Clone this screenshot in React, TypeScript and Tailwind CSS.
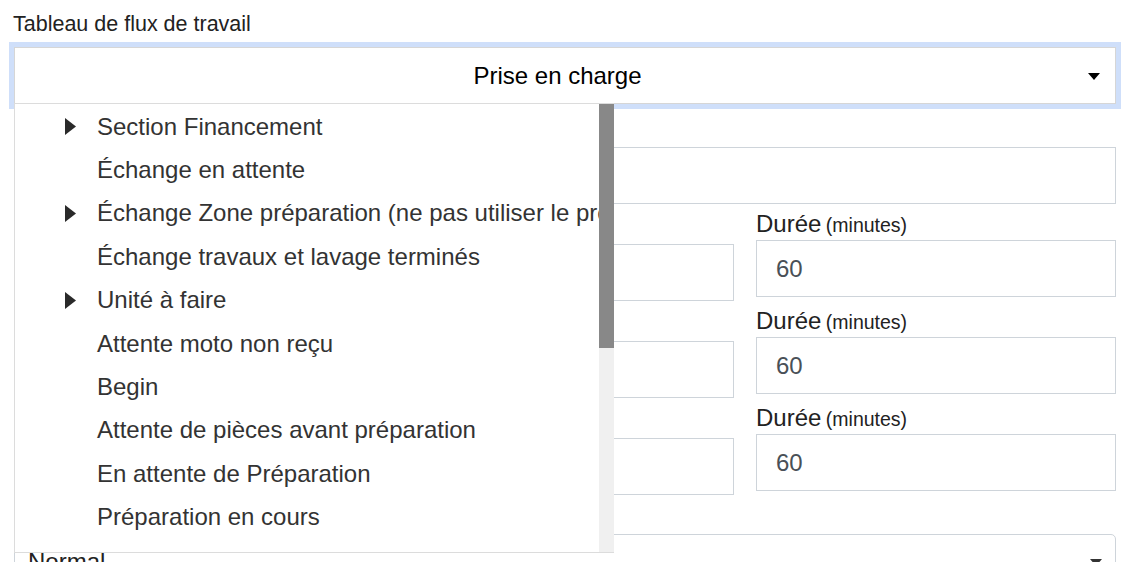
import React from "react";

const items: { label: string; arrow: boolean }[] = [
  { label: "Section Financement", arrow: true },
  { label: "Échange en attente", arrow: false },
  { label: "Échange Zone préparation (ne pas utiliser le processus)", arrow: true },
  { label: "Échange travaux et lavage terminés", arrow: false },
  { label: "Unité à faire", arrow: true },
  { label: "Attente moto non reçu", arrow: false },
  { label: "Begin", arrow: false },
  { label: "Attente de pièces avant préparation", arrow: false },
  { label: "En attente de Préparation", arrow: false },
  { label: "Préparation en cours", arrow: false },
  { label: "Préparation terminée", arrow: false },
];

function Caret({ className }: { className?: string }) {
  return (
    <svg width="12" height="7" viewBox="0 0 12 7" className={className}>
      <path d="M0 0 H12 L6 7 Z" fill="currentColor" />
    </svg>
  );
}

function Arrow() {
  return (
    <svg width="11" height="17" viewBox="0 0 11 17" className="text-[#2a2a2a]">
      <path d="M0 0 L11 8.5 L0 17 Z" fill="currentColor" />
    </svg>
  );
}

function DurationRow() {
  return (
    <div className="grid grid-cols-[720px_360px] gap-x-[22px]">
      <div className="flex flex-col">
        <div className="h-[24px] text-[24px] leading-[24px] text-[#222]">Début</div>
        <div className="mt-[8px] h-[57px] border border-[#ced4da] bg-white" />
      </div>
      <div className="flex flex-col">
        <div className="h-[24px] leading-[24px] text-[#222] whitespace-nowrap">
          <span className="text-[24px]">Durée</span>{" "}
          <span className="text-[19.5px]">(minutes)</span>
        </div>
        <div className="mt-[4px] h-[57px] border border-[#ced4da] bg-white flex items-center px-[19px] text-[24px] text-[#495057]">
          60
        </div>
      </div>
    </div>
  );
}

export default function App() {
  return (
    <div
      className="w-[1140px] h-[562px] overflow-hidden bg-white pl-[14px] pr-[24px]"
      style={{ fontFamily: '"Liberation Sans", Arial, sans-serif' }}
    >
      <div className="pt-[12px] h-[36px] text-[21.5px] leading-[24px] text-[#222] -ml-[1px] whitespace-nowrap">
        Tableau de flux de travail
      </div>
      <div className="mt-[11px] relative h-[57px] border border-[#d6d6d6] bg-white shadow-[0_0_0_5px_#cfdffa] flex items-center justify-center pr-[15px] text-[24px] text-black">
        Prise en charge
        <Caret className="absolute right-[15px] top-[25px] text-black" />
      </div>

      <div className="relative">
        {/* underlying form */}
        <div className="flex flex-col">
          <div className="h-[24px] mt-[16px] text-[22px] leading-[24px] text-[#222]">Nom</div>
          <div className="mt-[3px] h-[57px] border border-[#ced4da] bg-white" />
          <div className="mt-[8px] flex flex-col gap-[8px]">
            <DurationRow />
            <DurationRow />
            <DurationRow />
          </div>
          <div className="mt-[12px] h-[24px] text-[22px] leading-[24px] text-[#222]">Priorité</div>
          <div className="mt-[3px] relative h-[57px] rounded-[5px] border border-[#ced4da] bg-white px-[13px] pt-[13px] text-[24px] leading-[28px] text-[#222]">
            Normal
            <Caret className="absolute right-[13px] top-[24px] text-[#333]" />
          </div>
        </div>

        {/* dropdown overlay */}
        <div className="absolute left-0 top-[-1px] w-[600px] h-[450px] bg-white border-l border-b border-t border-[#dcdcdc] flex overflow-hidden">
          <div className="flex-1 overflow-hidden pt-[1px]">
            {items.map((it) => (
              <div
                key={it.label}
                className="h-[43.4px] flex items-center whitespace-nowrap text-[24px] text-[#333]"
              >
                <div className="w-[82px] flex justify-end pr-[21px] shrink-0">
                  {it.arrow ? <Arrow /> : null}
                </div>
                <span>{it.label}</span>
              </div>
            ))}
          </div>
          <div className="w-[15px] shrink-0 bg-[#f0f0f0] flex flex-col">
            <div className="h-[244px] bg-[#888888]" />
          </div>
        </div>
      </div>
    </div>
  );
}
